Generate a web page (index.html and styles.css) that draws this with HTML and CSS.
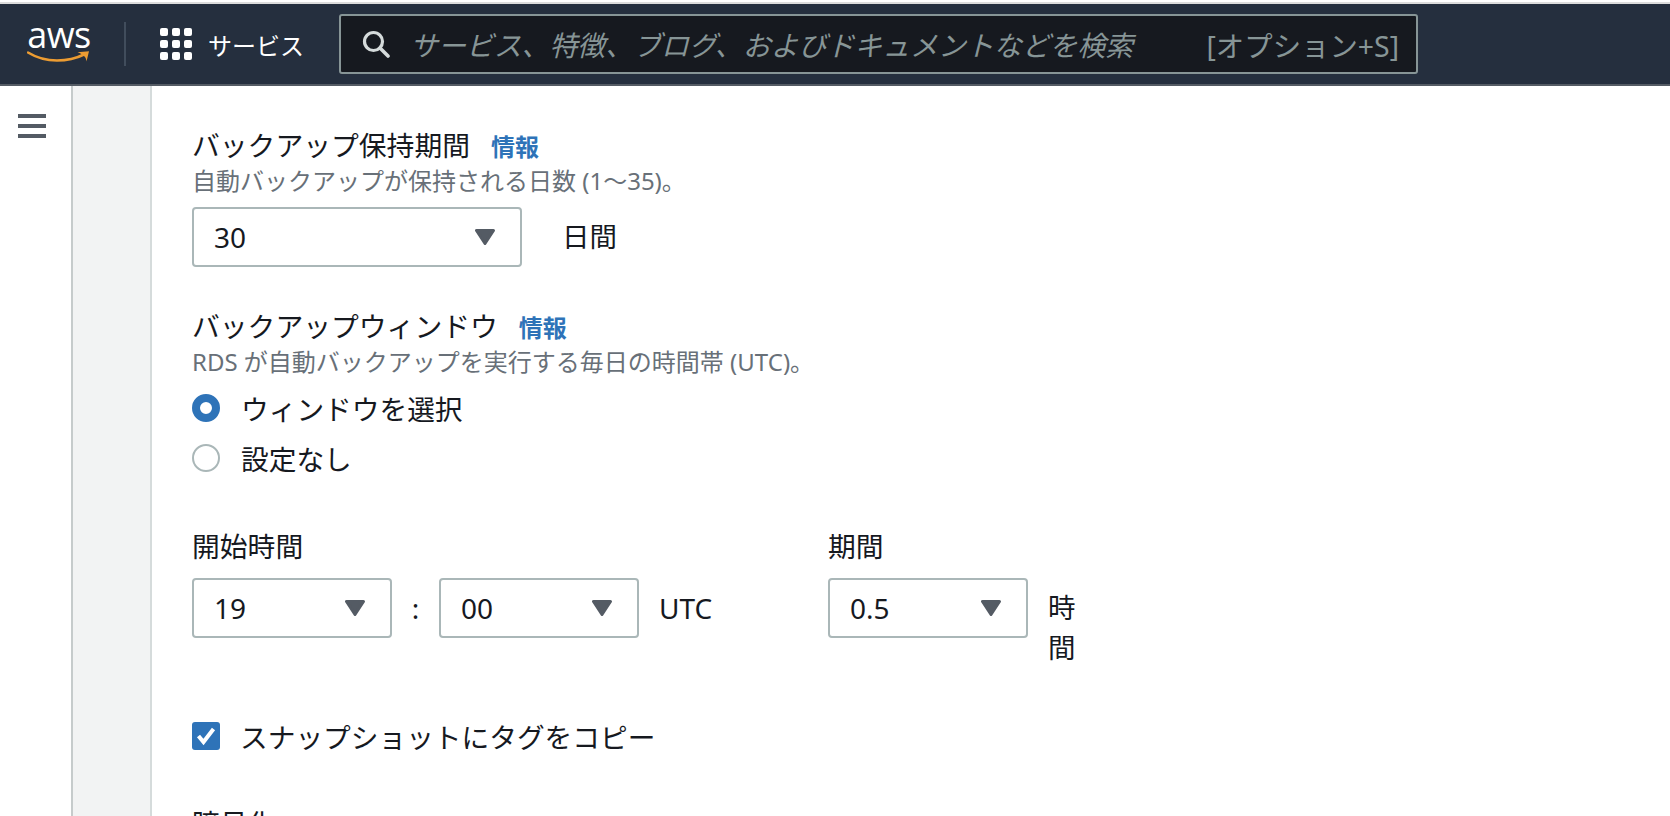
FILE: index.html
```html
<!DOCTYPE html>
<html lang="ja">
<head>
<meta charset="utf-8">
<title>RDS バックアップ設定</title>
<link rel="stylesheet" href="styles.css">
</head>
<body>
<svg class="defs" width="0" height="0"><symbol id="caret" viewBox="0 0 20 16"><path d="M1.5 1.5H18.5L10 14.5Z" fill="#545b64" stroke="#545b64" stroke-width="3" stroke-linejoin="round"/></symbol></svg>
<header class="topbar">
  <div class="logo">
    <span class="logo-text">aws</span>
    <svg class="logo-smile" viewBox="0 0 64 14" width="64" height="14"><path d="M1 2.5C10 8 19 10.5 30 10.5C40 10.5 50 8 57 4.5" fill="none" stroke="#ec9c32" stroke-width="2.6" stroke-linecap="round"/><path d="M50.5 2.2L62 1.2L59.5 11.5C59.2 8 58 5 50.5 2.2Z" fill="#ec9c32"/></svg>
  </div>
  <div class="divider"></div>
  <svg class="grid-icon" viewBox="0 0 32 32" width="32" height="32" fill="#fff">
    <rect x="0" y="0" width="8" height="8" rx="2"/><rect x="12" y="0" width="8" height="8" rx="2"/><rect x="24" y="0" width="8" height="8" rx="2"/>
    <rect x="0" y="12" width="8" height="8" rx="2"/><rect x="12" y="12" width="8" height="8" rx="2"/><rect x="24" y="12" width="8" height="8" rx="2"/>
    <rect x="0" y="24" width="8" height="8" rx="2"/><rect x="12" y="24" width="8" height="8" rx="2"/><rect x="24" y="24" width="8" height="8" rx="2"/>
  </svg>
  <span class="services">サービス</span>
  <div class="search">
    <svg class="search-icon" viewBox="0 0 28 28" width="28" height="28"><circle cx="11.5" cy="11.5" r="9" fill="none" stroke="#d5dbdb" stroke-width="3.2"/><path d="M18 18L26 26" stroke="#d5dbdb" stroke-width="3.6" stroke-linecap="round"/></svg>
    <span class="placeholder">サービス、特徴、ブログ、およびドキュメントなどを検索</span>
    <span class="shortcut">[オプション+S]</span>
  </div>
</header>
<div class="layout">
  <nav class="rail">
    <svg class="menu-icon" viewBox="0 0 28 24" width="28" height="24" fill="#545b64"><rect y="0" width="28" height="4"/><rect y="10" width="28" height="4"/><rect y="20" width="28" height="4"/></svg>
  </nav>
  <div class="gutter"></div>
  <main class="content">
    <section class="field retention">
      <div class="label">バックアップ保持期間<a class="info">情報</a></div>
      <div class="hint">自動バックアップが保持される日数 (1〜35)。</div>
      <div class="row">
        <div class="select w-retention"><span>30</span><svg class="caret" width="20" height="16"><use href="#caret"/></svg></div>
        <span class="unit unit-days">日間</span>
      </div>
    </section>
    <section class="field window">
      <div class="label">バックアップウィンドウ<a class="info">情報</a></div>
      <div class="hint">RDS が自動バックアップを実行する毎日の時間帯 (UTC)。</div>
      <div class="radio-row"><i class="radio on"></i><span>ウィンドウを選択</span></div>
      <div class="radio-row"><i class="radio"></i><span>設定なし</span></div>
    </section>
    <section class="times">
      <div class="time-col start">
        <div class="label small">開始時間</div>
        <div class="row">
          <div class="select w-time"><span>19</span><svg class="caret" width="20" height="16"><use href="#caret"/></svg></div>
          <span class="colon">:</span>
          <div class="select w-time"><span>00</span><svg class="caret" width="20" height="16"><use href="#caret"/></svg></div>
          <span class="unit unit-utc">UTC</span>
        </div>
      </div>
      <div class="time-col">
        <div class="label small">期間</div>
        <div class="row">
          <div class="select w-duration"><span>0.5</span><svg class="caret" width="20" height="16"><use href="#caret"/></svg></div>
          <span class="unit unit-hours">時間</span>
        </div>
      </div>
    </section>
    <div class="check-row">
      <svg class="checkbox" viewBox="0 0 28 28" width="28" height="28"><rect width="28" height="28" rx="3" fill="#2e73b8"/><path d="M6.5 14L11.5 20L21.5 7" fill="none" stroke="#fff" stroke-width="4"/></svg>
      <span>スナップショットにタグをコピー</span>
    </div>
    <div class="label encryption">暗号化</div>
  </main>
</div>
</body>
</html>
```

FILE: styles.css
```css
* { box-sizing: border-box; }
html, body { margin: 0; height: 100%; overflow: hidden; background: #fff; }
body {
  font-family: "Noto Sans", "Noto Sans CJK JP", sans-serif;
  font-size: 28px;
  color: #16191f;
  padding-top: 2px;
}
.defs { display: block; height: 0; }
.topbar {
  display: flex;
  align-items: center;
  height: 84px;
  background: #252f3e;
  border-top: 2px solid #dcdcdc;
  border-bottom: 2px solid #545b64;
  padding-left: 27px;
}
.logo { display: flex; flex-direction: column; align-items: center; width: 64px; margin-top: -4px; }
.logo-text { font-family: "Open Sans", sans-serif; font-size: 36px; line-height: 28px; color: #fff; letter-spacing: -0.5px; }
.logo-smile { margin-top: 1px; }
.divider { width: 2px; height: 44px; background: #414d5c; margin-left: 33px; }
.grid-icon { margin-left: 34px; flex: none; }
.services { margin-left: 16px; font-size: 24px; color: #fff; width: 96px; flex: none; white-space: nowrap; }
.search {
  display: flex;
  align-items: center;
  flex: none;
  margin-left: 35px;
  width: 1079px;
  height: 60px;
  background: #16191f;
  border: 2px solid #879596;
  border-radius: 3px;
  padding-left: 21px;
  padding-right: 17px;
}
.search-icon { flex: none; }
.placeholder { margin-left: 20px; color: #879596; font-style: italic; font-size: 27.9px; white-space: nowrap; }
.shortcut { margin-left: auto; color: #879596; font-size: 28.4px; white-space: nowrap; }

.layout { display: flex; height: 730px; }
.rail { width: 73px; flex: none; border-right: 2px solid #c6cbcb; padding: 28px 0 0 18px; }
.menu-icon { display: block; }
.gutter { width: 79px; flex: none; background: #f2f3f3; border-right: 2px solid #d5dbdb; }
.content { flex: 1; padding: 41px 0 0 40px; overflow: hidden; }

.label { line-height: 36px; font-size: 27.8px; }
.label.small { line-height: 38px; }
.info { color: #2e73b8; font-size: 24px; font-weight: 700; margin-left: 21px; }
.hint { color: #687078; font-size: 24px; line-height: 31px; white-space: nowrap; }
.row { display: flex; align-items: flex-start; }
.field.retention .row { margin-top: 11px; }
.select {
  display: flex;
  align-items: center;
  justify-content: space-between;
  height: 60px;
  border: 2px solid #aab7b8;
  border-radius: 4px;
  padding: 0 25px 0 20px;
  font-size: 28px;
}
.w-retention { width: 330px; }
.w-time { width: 200px; }
.w-duration { width: 200px; }
.caret { flex: none; display: block; }
.unit { line-height: 60px; font-size: 27.5px; }
.unit-days { margin-left: 40px; }
.unit-utc { margin-left: 20px; font-size: 28px; }
.unit-hours { margin-left: 20px; width: 28px; line-height: 40px; padding-top: 10px; }
.colon { width: 47px; text-align: center; line-height: 60px; font-size: 28px; }

.window { margin-top: 41px; }
.radio-row { display: flex; align-items: center; height: 50px; font-size: 27.7px; }
.hint + .radio-row { margin-top: 6px; }
.radio { width: 28px; height: 28px; border-radius: 50%; border: 2px solid #aab7b8; margin-right: 21px; flex: none; }
.radio.on { border: 8px solid #2e73b8; }

.times { display: flex; margin-top: 44px; }
.time-col.start { width: 636px; flex: none; }
.times .row { margin-top: 13px; }

.check-row { display: flex; align-items: center; margin-top: 53px; height: 30px; font-size: 27.7px; }
.checkbox { margin-right: 20px; flex: none; }
.encryption { margin-top: 54px; }
```
